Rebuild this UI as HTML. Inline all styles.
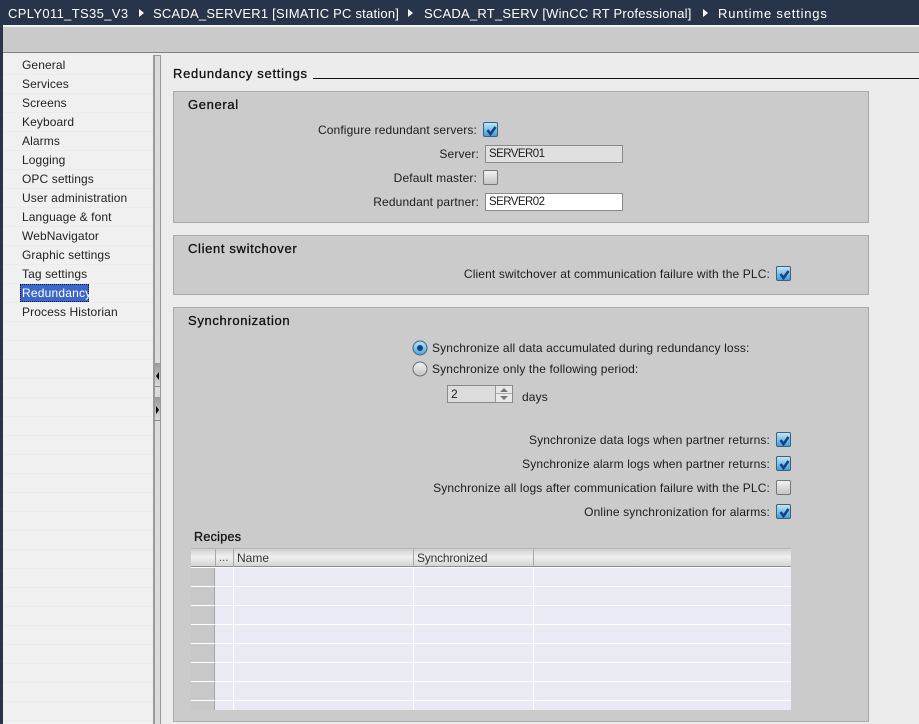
<!DOCTYPE html>
<html><head><meta charset="utf-8">
<style>
html,body{margin:0;padding:0;width:919px;height:724px;overflow:hidden;background:#ececec}
body{position:relative;font-family:"Liberation Sans",sans-serif;font-size:12px;color:#1c1c1c}
div,span{position:absolute;box-sizing:border-box;white-space:nowrap}
.t{height:16px;line-height:16px;letter-spacing:.13px}
.r{text-align:right}
.h{font-size:13px;font-weight:400;height:18px;line-height:18px;letter-spacing:.65px;color:#111;-webkit-text-stroke:.3px #111}
.p{left:173px;width:696px;background:#cbcbcb;border:1px solid #aaa}
.n{left:3px;width:150px;height:19px;border-bottom:1px solid #ebebeb}
.i{left:22px;height:16px;line-height:16px;letter-spacing:.1px;color:#222}
.c{width:15px;height:15px;border-radius:2px;border:1px solid #3d5f7c;background:linear-gradient(#bfe6f5,#3fa0d6)}
.u{width:15px;height:15px;border-radius:2px;border:1px solid #777;background:linear-gradient(#f2f2f2,#c4c4c4)}
.c svg{position:absolute;left:1px;top:1px}
.f{height:18px;border:1px solid #8a8a8a;padding-left:3px;line-height:16px;font-size:11.5px;letter-spacing:-.55px}
.l{position:absolute;background:#fff}
.v{position:absolute;background:#fff;width:1px;top:567px;height:143px}
.g{position:absolute;background:#a8a8a8;width:1px;top:549px;height:18px}
</style></head><body>
<!-- title -->
<div style="left:0;top:0;width:919px;height:25px;background:#27344a"></div>
<div class="t" style="left:8px;top:6px;color:#fff;font-size:13px;letter-spacing:.35px">CPLY011_TS35_V3</div>
<div class="t" style="left:153px;top:6px;color:#fff;font-size:13px;letter-spacing:.22px">SCADA_SERVER1 [SIMATIC PC station]</div>
<div class="t" style="left:424px;top:6px;color:#fff;font-size:13px;letter-spacing:.23px">SCADA_RT_SERV [WinCC RT Professional]</div>
<div class="t" style="left:718px;top:6px;color:#fff;font-size:13px;letter-spacing:.8px">Runtime settings</div>
<svg style="position:absolute;left:0;top:0" width="919" height="25"><path fill="#fff" d="M139 9l5 4-5 4zM408 9l5 4-5 4zM703 9l5 4-5 4z"/></svg>
<div style="left:0;top:25px;width:919px;height:2px;background:#f4f4f4"></div>
<div style="left:3px;top:27px;width:916px;height:25px;background:#cacaca"></div>
<div style="left:3px;top:52px;width:916px;height:1px;background:#808080"></div>
<div style="left:0;top:25px;width:3px;height:699px;background:#27344a"></div>
<!-- sidebar -->
<div style="left:3px;top:53px;width:150px;height:671px;background:#f0f0f0"></div>
<div class="n" style="top:56px"></div><div class="n" style="top:75px"></div><div class="n" style="top:94px"></div><div class="n" style="top:113px"></div><div class="n" style="top:132px"></div><div class="n" style="top:151px"></div><div class="n" style="top:170px"></div><div class="n" style="top:189px"></div><div class="n" style="top:208px"></div><div class="n" style="top:227px"></div><div class="n" style="top:246px"></div><div class="n" style="top:265px"></div><div class="n" style="top:284px"></div><div class="n" style="top:303px"></div><div class="n" style="top:322px"></div><div class="n" style="top:341px"></div><div class="n" style="top:360px"></div><div class="n" style="top:379px"></div><div class="n" style="top:398px"></div><div class="n" style="top:417px"></div><div class="n" style="top:436px"></div><div class="n" style="top:455px"></div><div class="n" style="top:474px"></div><div class="n" style="top:493px"></div><div class="n" style="top:512px"></div><div class="n" style="top:531px"></div><div class="n" style="top:550px"></div><div class="n" style="top:569px"></div><div class="n" style="top:588px"></div><div class="n" style="top:607px"></div><div class="n" style="top:626px"></div><div class="n" style="top:645px"></div><div class="n" style="top:664px"></div><div class="n" style="top:683px"></div><div class="n" style="top:702px"></div>
<div class="i" style="top:57px">General</div>
<div class="i" style="top:76px">Services</div>
<div class="i" style="top:95px">Screens</div>
<div class="i" style="top:114px">Keyboard</div>
<div class="i" style="top:133px">Alarms</div>
<div class="i" style="top:152px">Logging</div>
<div class="i" style="top:171px">OPC settings</div>
<div class="i" style="top:190px">User administration</div>
<div class="i" style="top:209px">Language &amp; font</div>
<div class="i" style="top:228px">WebNavigator</div>
<div class="i" style="top:247px">Graphic settings</div>
<div class="i" style="top:266px">Tag settings</div>
<div style="left:20px;top:284px;width:69px;height:18px;background:#3c66c8;border:1px dotted #0b1c40"></div>
<div class="i" style="top:285px;color:#fff;letter-spacing:.2px">Redundancy</div>
<div class="i" style="top:304px">Process Historian</div>
<!-- splitter -->
<div style="left:153px;top:55px;width:8px;height:669px;background:#dcdcdc;border-left:2px solid #9a9a9a;border-right:1px solid #9a9a9a"></div>
<div style="left:153px;top:55px;width:8px;height:1px;background:#9a9a9a"></div>
<div style="left:155px;top:363px;width:5px;height:24px;background:linear-gradient(#999,#ddd)"></div>
<div style="left:155px;top:397px;width:5px;height:24px;background:linear-gradient(#999,#ddd)"></div>
<div style="left:155px;top:386px;width:5px;height:1px;background:#888"></div>
<div style="left:155px;top:420px;width:5px;height:1px;background:#888"></div>
<svg style="position:absolute;left:153px;top:360px" width="8" height="60"><path fill="#000" d="M6 12v8l-3-4zM3 46v8l3-4z"/></svg>
<!-- heading -->
<div class="h" style="left:173px;top:65px;letter-spacing:.7px">Redundancy settings</div>
<div style="left:313px;top:78px;width:606px;height:1px;background:#111"></div>
<!-- General -->
<div class="p" style="top:91px;height:132px"></div>
<div class="h" style="left:188px;top:96px">General</div>
<div class="t r" style="left:280px;width:197px;top:122px">Configure redundant servers:</div>
<div class="c" style="left:483px;top:122px"><svg width="13" height="13"><path d="M2.5 6l3 4 5-7" fill="none" stroke="#1a3f86" stroke-width="2.6"/></svg></div>
<div class="t r" style="left:380px;width:99px;top:146px">Server:</div>
<div class="f" style="left:485px;top:145px;width:138px;background:#e0e0e0">SERVER01</div>
<div class="t r" style="left:340px;width:137px;top:170px">Default master:</div>
<div class="u" style="left:483px;top:170px"></div>
<div class="t r" style="left:340px;width:139px;top:194px">Redundant partner:</div>
<div class="f" style="left:485px;top:193px;width:138px;background:#fff">SERVER02</div>
<!-- Client -->
<div class="p" style="top:235px;height:60px"></div>
<div class="h" style="left:188px;top:240px">Client switchover</div>
<div class="t r" style="left:400px;width:370px;top:266px">Client switchover at communication failure with the PLC:</div>
<div class="c" style="left:776px;top:266px"><svg width="13" height="13"><path d="M2.5 6l3 4 5-7" fill="none" stroke="#1a3f86" stroke-width="2.6"/></svg></div>
<!-- Sync -->
<div class="p" style="top:307px;height:415px"></div>
<div class="h" style="left:188px;top:312px">Synchronization</div>
<svg style="position:absolute;left:412px;top:340px" width="16" height="37"><defs><linearGradient id="a" x2="0" y2="1"><stop offset="0" stop-color="#f4f4f4"/><stop offset="1" stop-color="#c2c2c2"/></linearGradient><linearGradient id="b" x2="0" y2="1"><stop offset="0" stop-color="#bfe6f5"/><stop offset="1" stop-color="#47a6da"/></linearGradient></defs><circle cx="8" cy="8" r="7" fill="url(#b)" stroke="#3d5f7c"/><circle cx="8" cy="8" r="3" fill="#14408a"/><circle cx="8" cy="29" r="7" fill="url(#a)" stroke="#6a6a6a"/></svg>
<div class="t" style="left:432px;top:340px">Synchronize all data accumulated during redundancy loss:</div>
<div class="t" style="left:432px;top:361px">Synchronize only the following period:</div>
<div class="f" style="left:447px;top:385px;width:66px;background:#dcdcdc;font-size:12px">2</div>
<div style="left:495px;top:386px;width:17px;height:16px;background:#e8e8e8;border-left:1px solid #999"></div>
<div style="left:496px;top:393px;width:16px;height:1px;background:#aaa"></div>
<svg style="position:absolute;left:496px;top:386px" width="16" height="16"><path fill="#777" d="M8 2l4 4H4zM8 14l4-4H4z"/></svg>
<div class="t" style="left:522px;top:389px">days</div>
<div class="t r" style="left:400px;width:370px;top:432px">Synchronize data logs when partner returns:</div>
<div class="c" style="left:776px;top:432px"><svg width="13" height="13"><path d="M2.5 6l3 4 5-7" fill="none" stroke="#1a3f86" stroke-width="2.6"/></svg></div>
<div class="t r" style="left:400px;width:370px;top:456px">Synchronize alarm logs when partner returns:</div>
<div class="c" style="left:776px;top:456px"><svg width="13" height="13"><path d="M2.5 6l3 4 5-7" fill="none" stroke="#1a3f86" stroke-width="2.6"/></svg></div>
<div class="t r" style="left:400px;width:370px;top:480px">Synchronize all logs after communication failure with the PLC:</div>
<div class="u" style="left:776px;top:480px"></div>
<div class="t r" style="left:400px;width:370px;top:504px">Online synchronization for alarms:</div>
<div class="c" style="left:776px;top:504px"><svg width="13" height="13"><path d="M2.5 6l3 4 5-7" fill="none" stroke="#1a3f86" stroke-width="2.6"/></svg></div>
<!-- Recipes -->
<div class="h" style="left:194px;top:528px;font-size:12.5px;letter-spacing:.3px">Recipes</div>
<div style="left:191px;top:548px;width:600px;height:19px;background:linear-gradient(#d0d0d0,#f0f0f0 45%,#d4d4d4);border-top:1px solid #b5b5b5;border-bottom:1px solid #8f8f8f"></div>
<div style="left:191px;top:567px;width:600px;height:143px;background:#e9eaf5"></div>
<div style="left:191px;top:567px;width:24px;height:143px;background:#c8c8c8;border-right:1px solid #a5a5a5"></div>
<div class="l" style="left:191px;top:567px;width:600px;height:1px"></div>
<div class="l" style="left:191px;top:586px;width:600px;height:1px"></div>
<div class="l" style="left:191px;top:605px;width:600px;height:1px"></div>
<div class="l" style="left:191px;top:624px;width:600px;height:1px"></div>
<div class="l" style="left:191px;top:643px;width:600px;height:1px"></div>
<div class="l" style="left:191px;top:662px;width:600px;height:1px"></div>
<div class="l" style="left:191px;top:681px;width:600px;height:1px"></div>
<div class="l" style="left:191px;top:700px;width:600px;height:1px"></div>
<div class="v" style="left:233px"></div><div class="v" style="left:413px"></div><div class="v" style="left:533px"></div>
<div class="g" style="left:215px"></div><div class="g" style="left:233px"></div><div class="g" style="left:413px"></div><div class="g" style="left:533px"></div>
<div class="t" style="left:219px;top:550px;font-size:11px;color:#444">...</div>
<div class="t" style="left:237px;top:550px;color:#333;letter-spacing:0">Name</div>
<div class="t" style="left:417px;top:550px;color:#333;letter-spacing:-.2px">Synchronized</div>
</body></html>
